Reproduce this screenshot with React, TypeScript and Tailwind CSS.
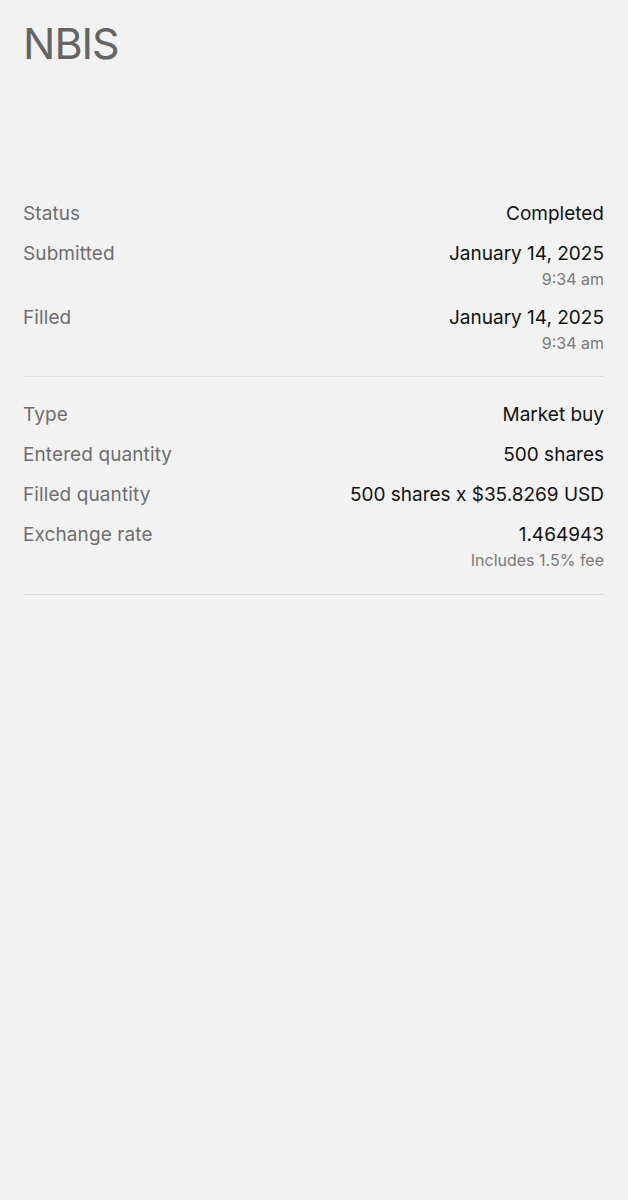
import React from 'react';

type Row = { label: string; value: string; sub?: string };

const statusRows: Row[] = [
  { label: 'Status', value: 'Completed' },
  { label: 'Submitted', value: 'January 14, 2025', sub: '9:34 am' },
  { label: 'Filled', value: 'January 14, 2025', sub: '9:34 am' },
];

const orderRows: Row[] = [
  { label: 'Type', value: 'Market buy' },
  { label: 'Entered quantity', value: '500 shares' },
  { label: 'Filled quantity', value: '500 shares x $35.8269 USD' },
  { label: 'Exchange rate', value: '1.464943', sub: 'Includes 1.5% fee' },
];

const DetailRow: React.FC<{ row: Row }> = ({ row }) => (
  <div className="flex justify-between">
    <div className="text-[19px] leading-[26px] text-[#6e6e6e] tracking-[0.1px]">{row.label}</div>
    <div className="flex flex-col items-end">
      <div className="text-[19px] leading-[26px] text-[#111111]">{row.value}</div>
      {row.sub && <div className="text-[16px] leading-[24px] text-[#7a7a7a]">{row.sub}</div>}
    </div>
  </div>
);

const App: React.FC = () => {
  return (
    <div className="min-h-[1200px] bg-[#f2f2f2] pl-[23px] pr-[24px] font-['Inter',sans-serif]">
      <div className="pt-[19px] h-[201px]">
        <h1 className="text-[43px] leading-[48px] text-[#646464] tracking-[-1px] font-normal">NBIS</h1>
      </div>

      <section className="flex flex-col gap-[14px] pb-[21px] border-b border-[#dcdcdc]">
        {statusRows.map((r) => (
          <DetailRow key={r.label} row={r} />
        ))}
      </section>

      <section className="flex flex-col gap-[14px] pt-[25px] pb-[22px] border-b border-[#dcdcdc]">
        {orderRows.map((r) => (
          <DetailRow key={r.label} row={r} />
        ))}
      </section>
    </div>
  );
};

export default App;
